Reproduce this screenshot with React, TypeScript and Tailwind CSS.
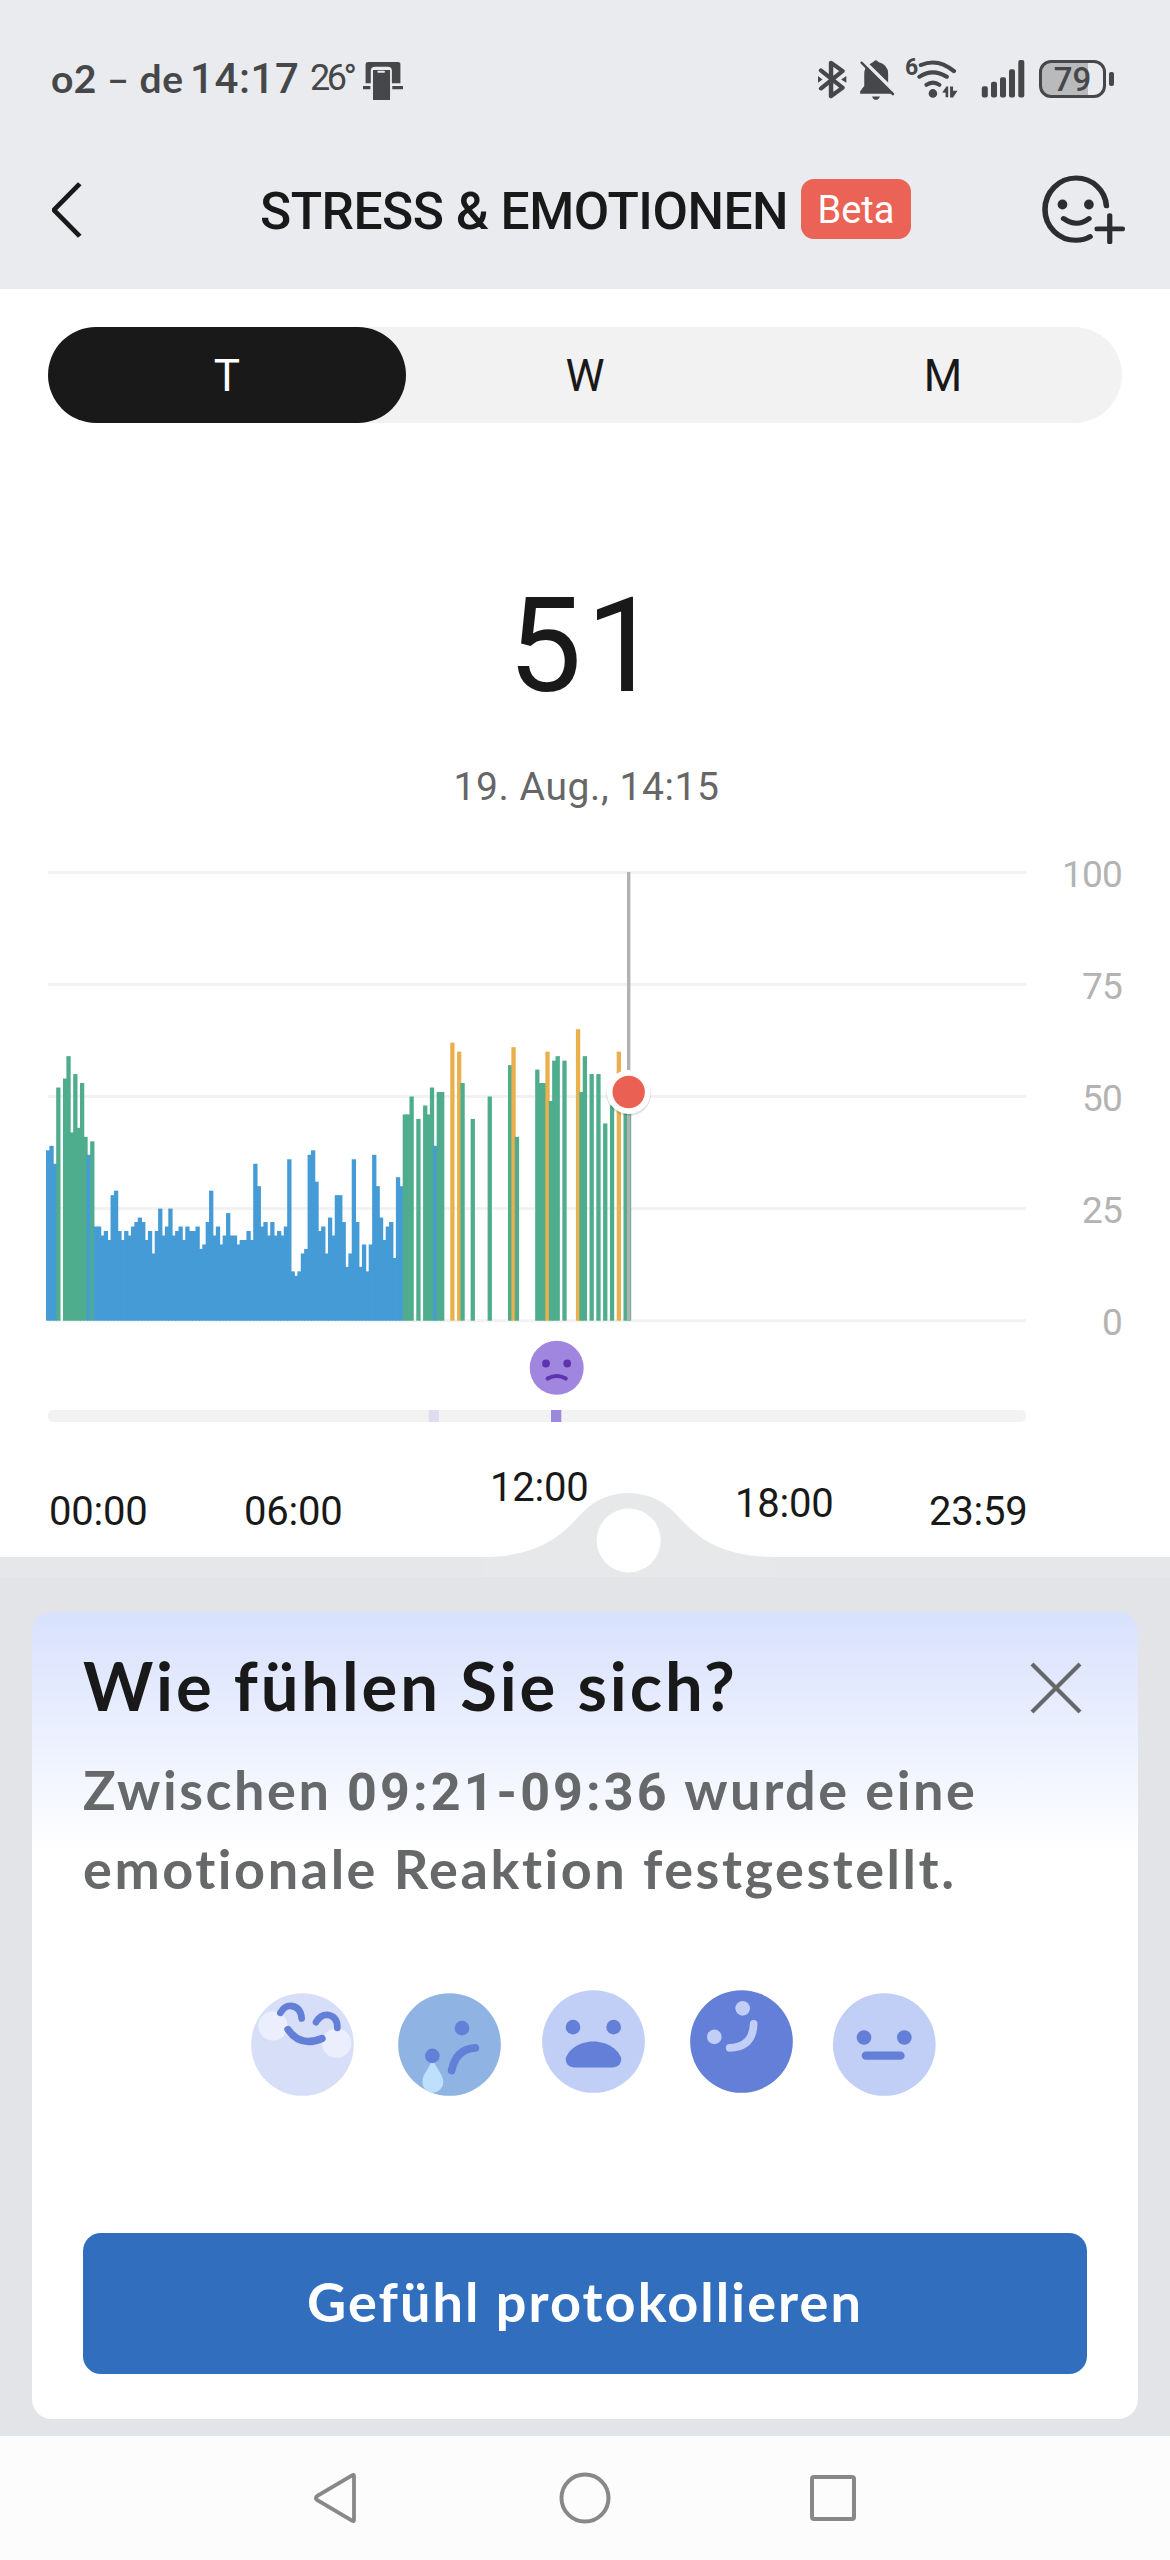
import React from 'react';

const BLUE = '#459bd5';
const GREEN = '#4fad8d';
const AMBER = '#e9b04d';

// Stress readings in five-minute slots, starting at midnight; 0 means no reading.
const READINGS: number[] = [
  38, 39, 35, 52, 0, 54, 59, 42, 55, 43, 53, 41, 37, 40, 21, 21, 19, 20, 18, 28, 29, 20, 18, 20,
  19, 21, 22, 23, 22, 18, 20, 15, 20, 25, 19, 21, 25, 19, 20, 21, 18, 21, 20, 20, 21, 16, 17, 22,
  29, 19, 21, 17, 19, 24, 19, 19, 17, 18, 18, 20, 18, 35, 30, 21, 22, 19, 22, 19, 20, 19, 21, 36,
  11, 10, 11, 15, 16, 37, 38, 31, 20, 21, 15, 23, 19, 28, 28, 22, 12, 15, 36, 22, 12, 17, 11, 17,
  37, 30, 23, 18, 21, 22, 14, 32, 30, 46, 46, 50, 0, 45, 0, 48, 46, 52, 39, 51, 51, 0, 0, 62,
  0, 60, 53, 0, 0, 45, 0, 0, 0, 0, 50, 0, 0, 0, 0, 0, 57, 61, 41, 0, 0, 0, 0, 0,
  56, 53, 53, 60, 49, 58, 59, 0, 58, 0, 0, 0, 65, 51, 59, 0, 55, 0, 55, 0, 44, 0, 48, 0,
  60, 0, 51, 51,
];

const colorFor = (v: number) => (v >= 60 ? AMBER : v >= 40 ? GREEN : BLUE);
const BASE = 468.7;
const UNIT = 4.484;

function Chart() {
  return (
    <svg width="1040" height="580" viewBox="0 0 1040 580" className="block shrink-0">
      {[100, 75, 50, 25, 0].map((v) => (
        <rect key={v} x="48" y={BASE - v * UNIT - 1.5} width="978" height="3" fill="#f2f2f2" />
      ))}
      {READINGS.map((v, i) =>
        v ? (
          <rect key={i} x={46 + i * 3.397} y={BASE - v * UNIT} width="4.3" height={v * UNIT} fill={colorFor(v)} />
        ) : null,
      )}
      <rect x="627" y="20" width="3.4" height={BASE - 20} fill="#b2b2b2" />
      <circle cx="628.7" cy="242" r="22.5" fill="#000" opacity="0.06" />
      <circle cx="628.7" cy="240.8" r="22.5" fill="#000" opacity="0.08" />
      <circle cx="628.7" cy="240" r="22" fill="#fff" />
      <circle cx="628.7" cy="240" r="16.2" fill="#ea6153" />
      <circle cx="556.7" cy="515.8" r="27" fill="#a186e0" />
      <circle cx="546" cy="511.5" r="3.9" fill="#5c35ae" />
      <circle cx="567.2" cy="511.5" r="3.9" fill="#5c35ae" />
      <path d="M547.6 526.6Q556.7 521.4 565.8 526.6" fill="none" stroke="#5c35ae" strokeWidth="4" strokeLinecap="round" />
      <rect x="48" y="558" width="978" height="12" rx="5" fill="#f2f2f2" />
      <rect x="428.6" y="558" width="10.3" height="12" fill="#e0dcf0" />
      <rect x="551" y="558" width="10.3" height="12" fill="#9e88dc" />
    </svg>
  );
}

function StatusIcons() {
  return (
    <svg width="186" height="44" viewBox="616 80 498.5 131.5" preserveAspectRatio="none" className="block shrink-0">
      <g fill="none" stroke="#464749" strokeWidth="12" strokeLinejoin="round" strokeLinecap="round">
        <path d="M632 120L690 172L659 197V97L690 122L632 174" />
      </g>
      <path d="M624 137L636 147L624 157zM700 137L686 147L700 157z" fill="#464749" />
      <path d="M772 95Q779 85 786 95Q812 103 812 130V156L762 102zM752 112L822 190H737V182L748 167V130Q748 120 752 112zM769 198H790Q787 208 779 208Q772 208 769 198z" fill="#464749" />
      <path d="M741 97L825 191" stroke="#464749" strokeWidth="7" strokeLinecap="round" />
      <g fill="none" stroke="#464749" strokeWidth="12" strokeLinecap="round">
        <path d="M900 104Q945 82 988 122" />
        <path d="M896 139Q931 113 969 139" />
        <path d="M915 163Q932 150 949 163" />
      </g>
      <ellipse cx="932" cy="189" rx="11.5" ry="13" fill="#464749" />
      <path d="M957 186L968 168H973V200H966V187zM978 168H986V181H998L986 201H978z" fill="#464749" />
    </svg>
  );
}

function StatusBar() {
  return (
    <div className="flex h-[158px] items-start text-[#464749]">
      <span className="mt-[56px] ml-[51px] w-[139px] font-[Lato,sans-serif] text-[39px] leading-[44px] font-bold tracking-[0.4px] whitespace-nowrap">
        o2 – de
      </span>
      <span className="mt-[57px] w-[120px] text-[42px] leading-[44px] font-medium tracking-[0.6px]">14:17</span>
      <span className="mt-[56px] w-[53px] text-[36px] leading-[44px] tracking-[-3.500px]">26°</span>
      <svg width="40" height="38" viewBox="970 96 108 114" preserveAspectRatio="none" className="mt-[62px] shrink-0">
        <path d="M977 160V102Q977 96 984 96H1064Q1071 96 1071 103V160H1048V122Q1048 110 1037 110H1003Q991 110 991 122V160zM970 168H990V178H970zM1049 168H1078V178H1049z" fill="#464749" />
        <path d="M997 120H1043V210H997z" fill="#464749" />
        <rect x="1009" y="122" width="20" height="6" rx="2" fill="#e9ebee" />
      </svg>
      <div className="relative mt-[57px] ml-[412px]">
        <div className="w-[165px] overflow-hidden">
          <StatusIcons />
        </div>
        <span className="absolute top-[-1px] left-[90px] text-[23px] leading-[24px] font-bold">6</span>
      </div>
      <svg width="44" height="38" viewBox="0 0 44 38" className="mt-[60px] ml-[1px] shrink-0">
        <g fill="#464749">
          <rect x="0.8" y="26.2" width="6" height="11.4" rx="2" />
          <rect x="10" y="21.8" width="6" height="15.8" rx="2" />
          <rect x="19" y="17.2" width="6" height="20.4" rx="2" />
          <rect x="28" y="9.3" width="6" height="28.3" rx="2" />
          <rect x="37.3" y="0" width="6" height="37.6" rx="2" />
        </g>
      </svg>
      <div className="mt-[60px] ml-[14px] flex items-center gap-[3px]">
        <div className="flex h-[38px] w-[67px] items-center justify-center rounded-[12px] border-[3px] border-[#464749] bg-linear-to-r from-[#b9babc] from-75% to-[#e9ebee] to-75% text-[33px] leading-none font-medium">
          79
        </div>
        <div className="h-[14px] w-[5px] rounded-[2px] bg-[#464749]" />
      </div>
    </div>
  );
}

function TitleBar() {
  return (
    <div className="flex h-[131px] items-start">
      <svg width="30" height="56" viewBox="139 455 80 166" preserveAspectRatio="none" className="mt-[24px] ml-[52px] shrink-0">
        <path d="M213 460L144 538L213 616" fill="none" stroke="#191919" strokeWidth="13" strokeLinejoin="round" />
      </svg>
      <h1 className="mt-[25px] ml-[178px] w-[541px] text-[51.5px] leading-[58px] font-medium tracking-[-0.5px] whitespace-nowrap text-[#191919]">
        STRESS &amp; EMOTIONEN
      </h1>
      <span className="mt-[21px] flex h-[60px] w-[110px] items-center justify-center rounded-[13px] bg-[#ea6356] pt-[2px] text-[38px] text-white">
        Beta
      </span>
      <svg width="83" height="69" viewBox="1224 434 223 206" preserveAspectRatio="none" className="mt-[17px] ml-[131px] shrink-0">
        <g fill="none" stroke="#2b2d2e" strokeWidth="15" strokeLinecap="round">
          <path d="M1397 526C1394 480 1360 443 1315 443C1270 443 1232 485 1232 537C1232 589 1270 629 1315 629Q1337 629 1353 618" />
          <path d="M1282 564Q1317 592 1350 564" />
          <path d="M1406 555V634M1372 595H1440" strokeWidth="14" />
        </g>
        <ellipse cx="1279" cy="522" rx="13" ry="15" fill="#2b2d2e" />
        <ellipse cx="1350" cy="522" rx="13" ry="15" fill="#2b2d2e" />
      </svg>
    </div>
  );
}

function Tabs() {
  return (
    <div className="mx-12 mt-[38px] grid h-24 grid-cols-3 rounded-full bg-[#f2f2f2] text-[44px] text-[#191919]">
      <div className="flex items-center justify-center rounded-full bg-[#191919] pt-[2px] text-white">T</div>
      <div className="flex items-center justify-center pt-[2px]">W</div>
      <div className="flex items-center justify-center pt-[2px]">M</div>
    </div>
  );
}

const INK = '#637fd7';

function Feelings() {
  return (
    <div className="ml-[219px] flex h-[108px] items-start">
      <svg width="103" height="103" viewBox="63 97.5 309 309" className="mt-[3px]">
        <circle cx="217.5" cy="252" r="154" fill="#d7dff8" />
        <circle cx="129" cy="196" r="44" fill="#ebeffd" />
        <circle cx="320" cy="248" r="44" fill="#ebeffd" />
        <g fill="none" stroke={INK} strokeWidth="20" strokeLinecap="round">
          <path d="M151 157Q163 135 183 136Q213 140 215 174" />
          <path d="M258 185Q271 162 292 163Q323 168 322 202" />
          <path d="M174 207Q211 261 276 234" strokeWidth="22" />
        </g>
      </svg>
      <svg width="103" height="103" viewBox="504 97.5 309 309" className="mt-[3px] ml-[44px]">
        <circle cx="658.5" cy="252" r="154" fill="#8fb3e3" />
        <path d="M608 292C614 322 640 339 640 365A31.500 31.500 0 0 1 577 365C577 339 602 322 608 292z" fill="#bde0fd" />
        <circle cx="696" cy="203" r="22" fill={INK} />
        <circle cx="607" cy="286" r="22" fill={INK} />
        <path d="M665 330Q678 265 736 262" fill="none" stroke={INK} strokeWidth="23" strokeLinecap="round" />
      </svg>
      <svg width="103" height="103" viewBox="935 90.5 309 309" className="ml-[41px]">
        <circle cx="1089.500" cy="245" r="154" fill="#c1cff7" />
        <circle cx="1028" cy="202" r="22" fill={INK} />
        <circle cx="1150" cy="202" r="22" fill={INK} />
        <path d="M1030 323Q1006 320 1006 297C1012 272 1045 245 1089 245C1133 245 1167 272 1173 297Q1173 320 1148 323z" fill={INK} />
      </svg>
      <svg width="103" height="103" viewBox="178 90.5 309 309" className="ml-[45px]">
        <circle cx="332.500" cy="245" r="154" fill={INK} />
        <circle cx="336" cy="145.500" r="22" fill="#c1cff7" />
        <circle cx="251" cy="231" r="22" fill="#c1cff7" />
        <path d="M297 264Q367 262 369 192" fill="none" stroke="#c1cff7" strokeWidth="23" strokeLinecap="round" />
      </svg>
      <svg width="103" height="103" viewBox="608 97.5 309 309" className="mt-[3px] ml-[40px]">
        <circle cx="762" cy="252" r="154" fill="#c1cff7" />
        <circle cx="701" cy="231" r="22" fill={INK} />
        <circle cx="822" cy="231" r="22" fill={INK} />
        <rect x="694" y="273" width="129" height="25" rx="12.5" fill={INK} />
      </svg>
    </div>
  );
}

function FeelingCard() {
  return (
    <section className="mx-8 flex h-[807px] flex-col rounded-[20px] bg-white bg-linear-to-b from-[#d8e1fd] to-white to-[240px] font-[Lato,sans-serif]">
      <div className="flex h-[140px] items-start">
        <h2 className="mt-[35px] ml-[51px] w-[947px] text-[67px] leading-[76px] font-bold tracking-[2.9px] text-[#191919]">
          Wie fühlen Sie sich?
        </h2>
        <svg width="52" height="52" viewBox="0 0 52 52" className="mt-[50px]">
          <path d="M2 2L50 50M50 2L2 50" stroke="#666769" strokeWidth="4.2" />
        </svg>
      </div>
      <p className="ml-[51px] h-[238px] text-[54px] leading-[76px] font-bold tracking-[2.55px] whitespace-nowrap text-[#66686a]">
        Zwischen <span className="font-[Roboto,sans-serif] text-[52px] tracking-[3.1px]">09:21-09:36</span> wurde eine
        <br />
        emotionale Reaktion festgestellt.
      </p>
      <Feelings />
      <button className="mx-[51px] mt-[135px] flex h-[141px] items-center justify-center rounded-[18px] bg-[#316fbe] pb-[5px] text-[54px] font-bold tracking-[2.1px] text-white">
        Gefühl protokollieren
      </button>
    </section>
  );
}

function NavBar() {
  return (
    <nav className="mt-[17px] flex h-[124px] bg-[#fcfcfc]">
      <svg width="44" height="52" viewBox="0 0 44 52" className="mt-[36px] ml-[313px]">
        <path d="M41 4V48Q41 50 39 48.500L4 28Q2 26 4 24L39 3.500Q41 2 41 4z" fill="none" stroke="#888" strokeWidth="3.8" />
      </svg>
      <svg width="52" height="52" viewBox="0 0 52 52" className="mt-[36px] ml-[202px]">
        <circle cx="26" cy="26" r="23.500" fill="none" stroke="#888" strokeWidth="4" />
      </svg>
      <svg width="46" height="46" viewBox="0 0 46 46" className="mt-[39px] ml-[199px]">
        <rect x="2" y="2" width="42" height="42" rx="2" fill="none" stroke="#888" strokeWidth="4" />
      </svg>
    </nav>
  );
}

export default function App() {
  return (
    <div className="h-[2560px] w-[1170px] overflow-hidden bg-[#e2e4e8] font-[Roboto,sans-serif]">
      <header className="h-[289px] bg-[#e9ebee]">
        <StatusBar />
        <TitleBar />
      </header>
      <main className="relative flex h-[1268px] flex-col bg-white">
        <Tabs />
        <div className="mt-[144px] h-[158px] pl-[2px] text-center text-[132px] leading-[158px] tracking-[4px] text-[#191919]">
          51
        </div>
        <div className="mt-[39px] h-[46px] pl-[3px] text-center text-[39px] leading-[46px] tracking-[0.6px] text-[#666]">
          19. Aug., 14:15
        </div>
        <div className="mt-[42px] flex h-[580px]">
          <Chart />
          <div className="mt-[1px] flex h-[492px] w-[82px] flex-col justify-between text-right text-[37px] leading-[44px] tracking-[-0.8px] text-[#b3b3b3]">
            <span>100</span>
            <span>75</span>
            <span>50</span>
            <span>25</span>
            <span>0</span>
          </div>
        </div>
        <div className="ml-[49px] flex h-[125px] items-start text-[40px] leading-[46px] tracking-[-0.2px] text-[#191919]">
          <span className="mt-[57px] w-[195px]">00:00</span>
          <span className="mt-[57px] w-[246px]">06:00</span>
          <span className="mt-[33px] w-[245px]">12:00</span>
          <span className="mt-[49px] w-[194px]">18:00</span>
          <span className="mt-[57px]">23:59</span>
        </div>
        <svg width="300" height="85" viewBox="478 1492 300 85" className="absolute top-[1203px] left-[478px]">
          <path d="M482 1557C545 1557 566 1530 583 1512C607 1486.500 650 1486.500 674 1512C691 1530 712 1557 775 1557V1577H482z" fill="#e6e8ea" />
          <circle cx="628.700" cy="1540.500" r="32" fill="#fff" />
        </svg>
      </main>
      <div className="h-[20px] bg-[#e6e7e9]" />
      <div className="h-[35px]" />
      <FeelingCard />
      <NavBar />
    </div>
  );
}
